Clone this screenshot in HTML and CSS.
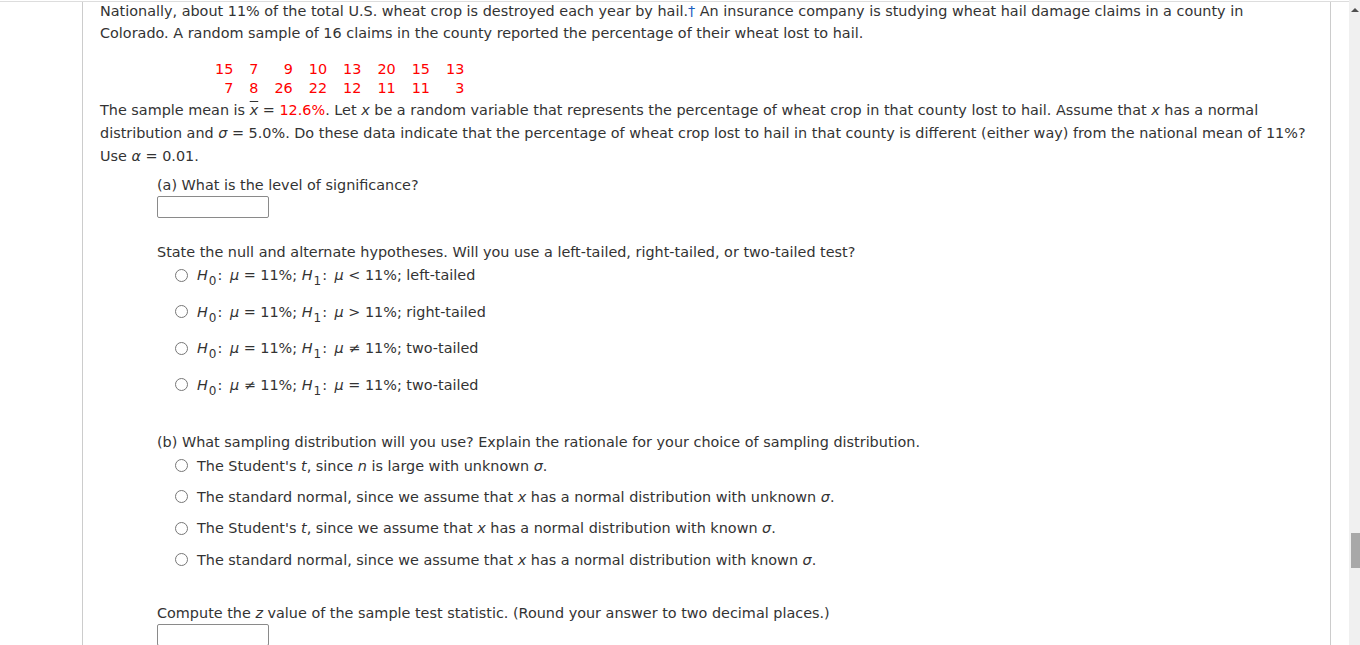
FILE: index.html
```html
<!DOCTYPE html>
<html>
<head>
<meta charset="utf-8">
<link rel="stylesheet" href="styles.css">
</head>
<body>
<div class="page">
  <div class="main">
    <div class="frame">
      <p class="intro">Nationally, about 11% of the total U.S. wheat crop is destroyed each year by hail.<span class="dagger">†</span> An insurance company is studying wheat hail damage claims in a county in Colorado. A random sample of 16 claims in the county reported the percentage of their wheat lost to hail.</p>
      <table class="data">
        <tr><td>15</td><td>7</td><td>9</td><td>10</td><td>13</td><td>20</td><td>15</td><td>13</td></tr>
        <tr><td>7</td><td>8</td><td>26</td><td>22</td><td>12</td><td>11</td><td>11</td><td>3</td></tr>
      </table>
      <p class="desc">The sample mean is <i class="xbar">x</i> = <span class="red">12.6%</span>. Let <i>x</i> be a random variable that represents the percentage of wheat crop in that county lost to hail. Assume that <i>x</i> has a normal distribution and <i>σ</i> = 5.0%. Do these data indicate that the percentage of wheat crop lost to hail in that county is different (either way) from the national mean of 11%? Use <i>α</i> = 0.01.</p>
      <div class="part">
        <p class="q-a">(a) What is the level of significance?</p>
        <div class="answer"></div>
        <p class="q-state">State the null and alternate hypotheses. Will you use a left-tailed, right-tailed, or two-tailed test?</p>
        <ul class="choices hyp">
          <li><span class="radio"></span><span><i>H</i><sub>0</sub><span class="colon">:</span> <i>μ</i> = 11%; <i>H</i><sub>1</sub><span class="colon">:</span> <i>μ</i> &lt; 11%; left-tailed</span></li>
          <li><span class="radio"></span><span><i>H</i><sub>0</sub><span class="colon">:</span> <i>μ</i> = 11%; <i>H</i><sub>1</sub><span class="colon">:</span> <i>μ</i> &gt; 11%; right-tailed</span></li>
          <li><span class="radio"></span><span><i>H</i><sub>0</sub><span class="colon">:</span> <i>μ</i> = 11%; <i>H</i><sub>1</sub><span class="colon">:</span> <i>μ</i> ≠ 11%; two-tailed</span></li>
          <li><span class="radio"></span><span><i>H</i><sub>0</sub><span class="colon">:</span> <i>μ</i> ≠ 11%; <i>H</i><sub>1</sub><span class="colon">:</span> <i>μ</i> = 11%; two-tailed</span></li>
        </ul>
        <p class="q-b">(b) What sampling distribution will you use? Explain the rationale for your choice of sampling distribution.</p>
        <ul class="choices dist">
          <li><span class="radio"></span><span>The Student's <i>t</i>, since <i>n</i> is large with unknown <i>σ</i>.</span></li>
          <li><span class="radio"></span><span>The standard normal, since we assume that <i>x</i> has a normal distribution with unknown <i>σ</i>.</span></li>
          <li><span class="radio"></span><span>The Student's <i>t</i>, since we assume that <i>x</i> has a normal distribution with known <i>σ</i>.</span></li>
          <li><span class="radio"></span><span>The standard normal, since we assume that <i>x</i> has a normal distribution with known <i>σ</i>.</span></li>
        </ul>
        <p class="q-z">Compute the <i>z</i> value of the sample test statistic. (Round your answer to two decimal places.)</p>
        <div class="answer"></div>
      </div>
    </div>
  </div>
  <div class="scrollbar">
    <div class="arrow"></div>
    <div class="track"><div class="thumb"></div></div>
  </div>
</div>
</body>
</html>
```
FILE: styles.css
```css
html, body {
  margin: 0;
  padding: 0;
  height: 645px;
  overflow: hidden;
  background: #ffffff;
}
body {
  font-family: "DejaVu Sans", Verdana, sans-serif;
  font-size: 14.4px;
  color: #333333;
}
.page {
  display: flex;
  height: 645px;
}
.main {
  flex: 1;
  margin-top: 1px;
  border-top: 1px solid #dddddd;
  overflow: hidden;
}
.frame {
  margin-left: 82px;
  width: 1216px;
  border-left: 1px solid #cccccc;
  border-right: 1px solid #cccccc;
  padding-left: 17px;
  padding-right: 14px;
  height: 700px;
}
p { margin: 0; }
.intro {
  line-height: 22px;
  margin-top: -2px;
}
.dagger { color: #1f5fbf; }
.red { color: #ff0000; }
i { font-style: italic; }
.xbar { text-decoration: overline; }
.data {
  border-collapse: collapse;
  margin: 16px 0 0 115px;
  color: #ff0000;
}
.data td {
  text-align: right;
  padding: 0 0 0 16px;
  line-height: 19px;
}
.data td:first-child { padding-left: 0; }
.desc {
  line-height: 23px;
  margin-top: 1px;
}
.part {
  padding-left: 57px;
}
.q-a {
  line-height: 22px;
  margin-top: 6px;
}
.answer {
  width: 110px;
  height: 20px;
  border: 1px solid #8a8a8a;
  border-radius: 2px;
}
.q-state {
  line-height: 22px;
  margin-top: 23px;
}
.choices {
  list-style: none;
  margin: 0;
  padding: 0 0 0 18px;
}
.choices li {
  display: flex;
  align-items: center;
  gap: 9px;
}
.hyp li { height: 36.5px; }
.hyp { margin-top: -6px; }
.dist li { height: 31.3px; }
.dist { margin-top: -3px; }
.radio {
  width: 11px;
  height: 11px;
  border: 1px solid #777777;
  border-radius: 50%;
  flex: none;
  background: #fff;
}
sub {
  font-size: 12px;
  vertical-align: -5px;
  line-height: 0;
  margin: 0 1px 0 1px;
}
.colon {
  margin-right: 3px;
}
.q-b {
  line-height: 22px;
  margin-top: 28px;
}
.q-z {
  line-height: 22px;
  margin-top: 27px;
}
.scrollbar {
  width: 11px;
  flex: none;
  background: #f0f0f0;
  display: flex;
  flex-direction: column;
  align-items: center;
}
.arrow {
  margin-top: 8px;
  width: 0;
  height: 0;
  border-left: 4px solid transparent;
  border-right: 4px solid transparent;
  border-bottom: 4px solid #505050;
}
.track {
  flex: 1;
  width: 100%;
  display: flex;
  flex-direction: column;
  align-items: flex-end;
}
.thumb {
  margin-top: 521px;
  width: 9px;
  height: 35px;
  background: #a8a8a8;
}
```
